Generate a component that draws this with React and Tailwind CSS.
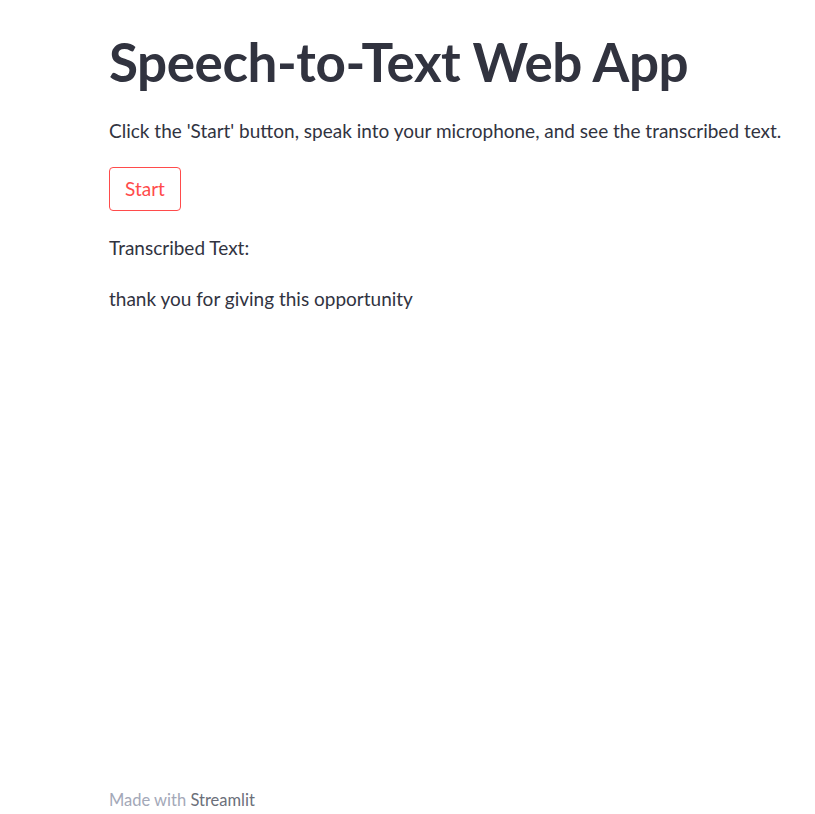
export default function App() {
  return (
    <div
      className="min-h-[814px] flex flex-col bg-white text-[#31333f]"
      style={{ fontFamily: "Lato, 'Noto Sans', sans-serif" }}
    >
      <main className="flex-1 pl-[109px] pr-[20px] pt-[30px]">
        <h1 className="text-[53px] font-bold leading-[64px] tracking-[-0.45px]">
          Speech-to-Text Web App
        </h1>
        <p className="mt-[24px] text-[19px] leading-[26px]">
          Click the 'Start' button, speak into your microphone, and see the transcribed text.
        </p>
        <button className="mt-[23px] h-[44px] w-[72px] rounded-[4px] border border-[#ff4b4b] bg-white text-[19px] text-[#ff4b4b]">
          Start
        </button>
        <p className="mt-[24px] text-[19px] leading-[26px]">Transcribed Text:</p>
        <p className="mt-[25px] text-[19px] leading-[26px]">thank you for giving this opportunity</p>
      </main>
      <footer className="pl-[109px] h-[26px] text-[16.5px] text-[#a3a8b8]">
        Made with <span className="text-[#6b6f7a]">Streamlit</span>
      </footer>
    </div>
  );
}
